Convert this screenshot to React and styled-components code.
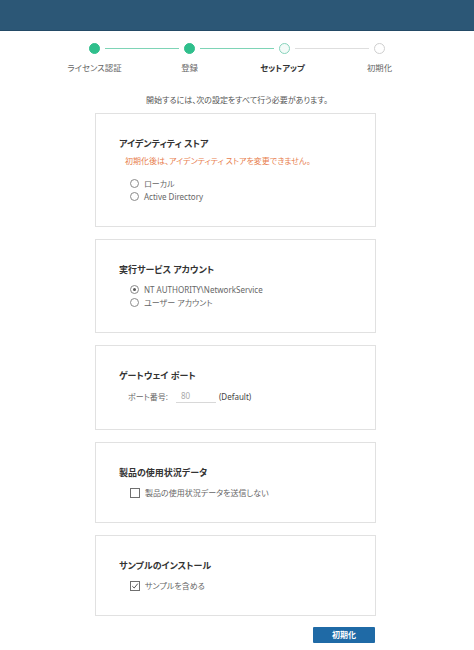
import React from "react";
import styled, { createGlobalStyle } from "styled-components";

const Global = createGlobalStyle`
  html, body { margin: 0; padding: 0; background: #ffffff; }
  body {
    font-family: "Noto Sans", "Noto Sans CJK JP", sans-serif;
    font-feature-settings: "palt";
    color: #555;
  }
`;

const Page = styled.div`
  width: 474px;
  min-height: 650px;
  background: #fff;
`;

const Header = styled.header`
  height: 31px;
  background: #2c5776;
  border-bottom: 1px solid #234a66;
  box-sizing: border-box;
`;

const Stepper = styled.ol`
  list-style: none;
  margin: 12px auto 0;
  padding: 0;
  width: 380px;
  display: grid;
  grid-template-columns: repeat(4, 1fr);
`;

const Step = styled.li`
  display: flex;
  flex-direction: column;
  align-items: center;
`;

const DotRow = styled.div`
  width: 100%;
  height: 11px;
  display: flex;
  align-items: center;
`;

const Line = styled.span`
  flex: 1;
  height: 1px;
  background: ${(p) => (p.$hidden ? "transparent" : p.$done ? "#7ed4b6" : "#dedede")};
  margin: ${(p) => (p.$side === "left" ? "0 5px 0 0" : "0 0 0 5px")};
`;

const Dot = styled.span`
  width: 11px;
  height: 11px;
  border-radius: 50%;
  box-sizing: border-box;
  flex: none;
  background: ${(p) => (p.$state === "done" ? "#2fbf8c" : p.$state === "current" ? "#f3fbf8" : "#fff")};
  border: 1px solid ${(p) => (p.$state === "done" ? "#2fbf8c" : p.$state === "current" ? "#86d3bb" : "#cfcfcf")};
`;

const StepLabel = styled.span`
  margin-top: 8px;
  font-size: 8.4px;
  line-height: 12px;
  color: ${(p) => (p.$current ? "#333" : "#666")};
  font-weight: ${(p) => (p.$current ? 700 : 400)};
  transform: translateX(${(p) => p.$shift || 0}px);
`;

const Intro = styled.p`
  margin: 20px 0 0;
  text-align: center;
  font-size: 8px;
  line-height: 12px;
  color: #555;
`;

const Cards = styled.div`
  width: 281px;
  margin: 7px 0 0 95px;
  display: flex;
  flex-direction: column;
  gap: 12px;
`;

const Card = styled.section`
  border: 1px solid #e1e1e1;
  padding: 24px 23px 23px;
  background: #fff;
`;

const Title = styled.h3`
  margin: 0;
  font-size: 9px;
  line-height: 12px;
  font-weight: 700;
  color: #333;
`;

const Warning = styled.p`
  margin: 5px 0 0 6px;
  font-size: 8px;
  line-height: 12px;
  color: #e8804f;
`;

const Options = styled.div`
  margin: ${(p) => p.$mt || 6}px 0 0 11px;
  display: flex;
  flex-direction: column;
`;

const OptionRow = styled.label`
  display: flex;
  align-items: center;
  height: 13px;
  gap: 5px;
  font-size: 8px;
  color: #666;
`;

const Radio = styled.span`
  width: 9px;
  height: 9px;
  box-sizing: border-box;
  border-radius: 50%;
  border: 1px solid #8a8a8a;
  display: flex;
  align-items: center;
  justify-content: center;
  &::after {
    content: "";
    width: 3px;
    height: 3px;
    border-radius: 50%;
    background: ${(p) => (p.$checked ? "#555" : "transparent")};
  }
`;

const Box = styled.span`
  width: 10px;
  height: 10px;
  box-sizing: border-box;
  border: 1px solid #6f6f6f;
  display: flex;
  align-items: center;
  justify-content: center;
`;

const PortRow = styled.div`
  margin: 5px 0 0 9px;
  height: 19px;
  display: flex;
  align-items: center;
  font-size: 8px;
  color: #666;
`;

const PortInput = styled.span`
  margin-left: 8px;
  width: 40px;
  height: 13px;
  box-sizing: border-box;
  padding-left: 5px;
  border-bottom: 1px solid #d8d8d8;
  color: #aaa;
  line-height: 12px;
`;

const DefaultText = styled.span`
  margin-left: 3px;
  color: #444;
`;

const Footer = styled.div`
  width: 281px;
  margin: 11px 0 0 95px;
  display: flex;
  justify-content: flex-end;
`;

const Button = styled.button`
  width: 62px;
  height: 16px;
  margin-right: 1px;
  padding: 0;
  border: none;
  border-radius: 1px;
  background: #1f6aa6;
  color: #fff;
  font-family: "Noto Sans CJK JP", sans-serif;
  font-size: 8px;
  font-weight: 700;
  line-height: 16px;
`;

const steps = [
  { label: "ライセンス認証", state: "done" },
  { label: "登録", state: "done" },
  { label: "セットアップ", state: "current", shift: -2 },
  { label: "初期化", state: "todo" },
];

function Check() {
  return (
    <svg width="8" height="8" viewBox="0 0 8 8">
      <path d="M1.3 4.2 L3.2 6 L6.8 1.6" fill="none" stroke="#555" strokeWidth="1" />
    </svg>
  );
}

export default function App() {
  return (
    <Page>
      <Global />
      <Header />
      <Stepper>
        {steps.map((s, i) => (
          <Step key={s.label}>
            <DotRow>
              <Line $side="left" $hidden={i === 0} $done={i <= 2} />
              <Dot $state={s.state} />
              <Line $side="right" $hidden={i === 3} $done={i <= 1} />
            </DotRow>
            <StepLabel $current={s.state === "current"} $shift={s.shift}>
              {s.label}
            </StepLabel>
          </Step>
        ))}
      </Stepper>
      <Intro>開始するには、次の設定をすべて行う必要があります。</Intro>
      <Cards>
        <Card>
          <Title>アイデンティティ ストア</Title>
          <Warning>初期化後は、アイデンティティ ストアを変更できません。</Warning>
          <Options $mt={10}>
            <OptionRow>
              <Radio />
              ローカル
            </OptionRow>
            <OptionRow>
              <Radio />
              Active Directory
            </OptionRow>
          </Options>
        </Card>
        <Card>
          <Title>実行サービス アカウント</Title>
          <Options $mt={7}>
            <OptionRow>
              <Radio $checked />
              NT AUTHORITY\NetworkService
            </OptionRow>
            <OptionRow>
              <Radio />
              ユーザー アカウント
            </OptionRow>
          </Options>
        </Card>
        <Card>
          <Title>ゲートウェイ ポート</Title>
          <PortRow>
            ポート番号:
            <PortInput>80</PortInput>
            <DefaultText>(Default)</DefaultText>
          </PortRow>
        </Card>
        <Card>
          <Title>製品の使用状況データ</Title>
          <Options $mt={7}>
            <OptionRow>
              <Box />
              製品の使用状況データを送信しない
            </OptionRow>
          </Options>
        </Card>
        <Card>
          <Title>サンプルのインストール</Title>
          <Options $mt={7}>
            <OptionRow>
              <Box>
                <Check />
              </Box>
              サンプルを含める
            </OptionRow>
          </Options>
        </Card>
      </Cards>
      <Footer>
        <Button>初期化</Button>
      </Footer>
    </Page>
  );
}
